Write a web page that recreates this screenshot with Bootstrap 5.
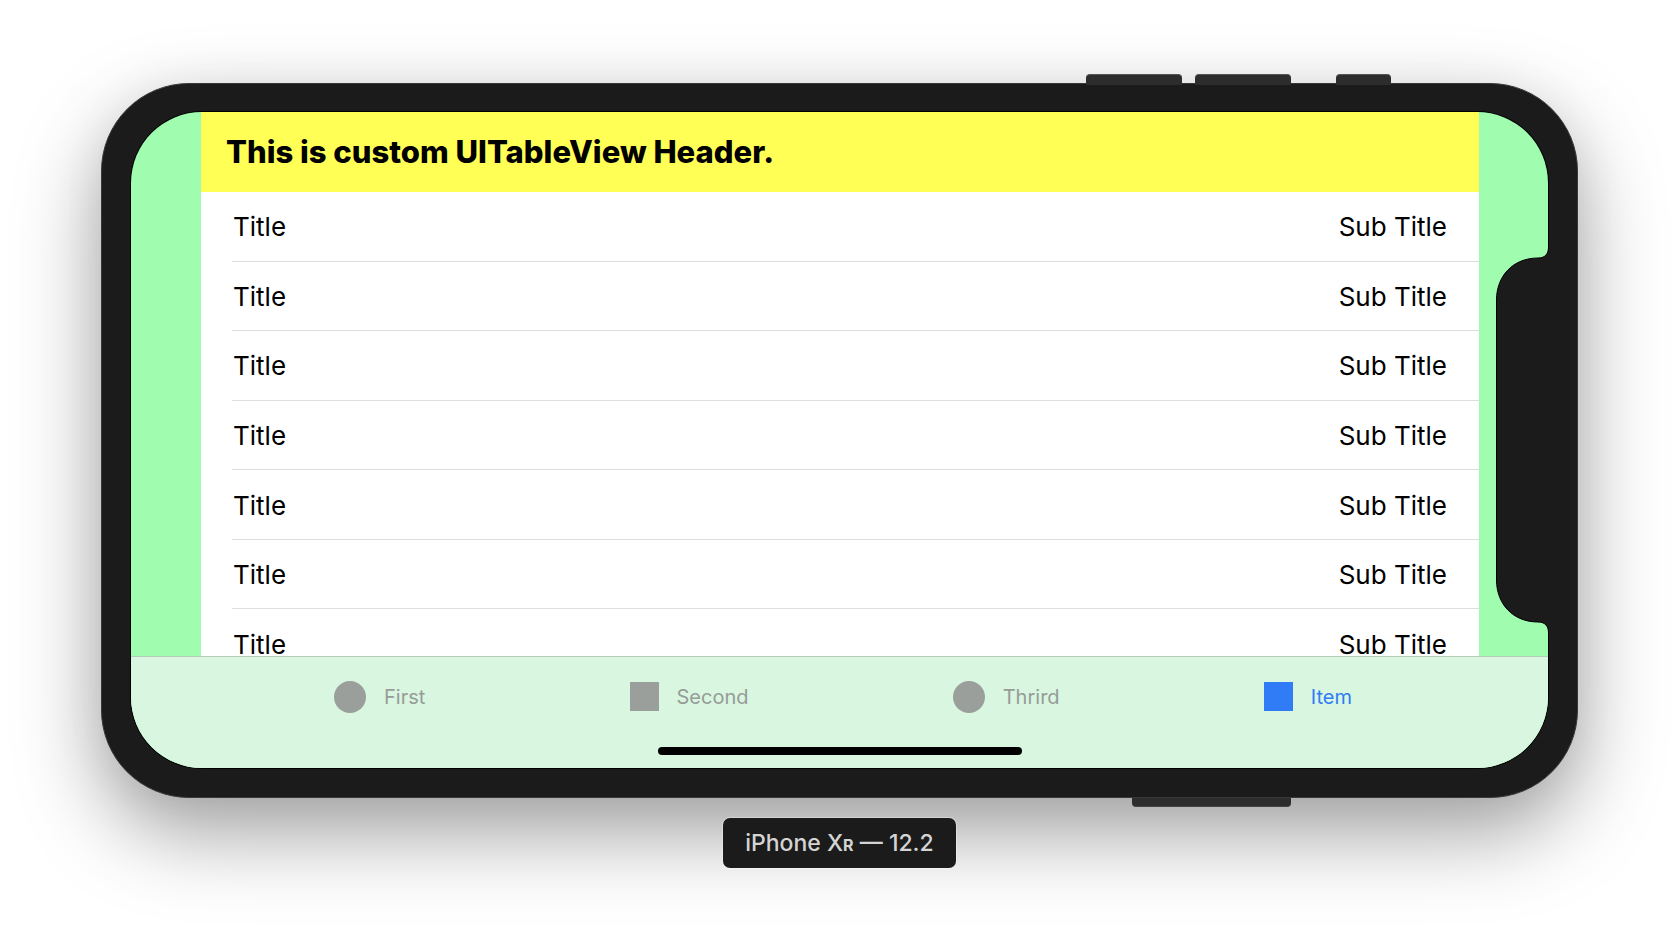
<!DOCTYPE html>
<html lang="en">
<head>
<meta charset="utf-8">
<meta name="viewport" content="width=device-width, initial-scale=1">
<title>Custom UITableView</title>
<link href="https://cdn.jsdelivr.net/npm/bootstrap@5.3.0/dist/css/bootstrap.min.css" rel="stylesheet">
<style>
  body { font-family: Inter, "Liberation Sans", sans-serif; color: #000; background: #fff; }
  .stage { padding: 74px 101px 0; }
  .side-keys { height: 9px; z-index: 1; }
  .side-key { width: 96px; background: #2c2d2c; }
  .keys-top { padding-right: 187px; }
  .keys-top .side-key { border-radius: 4px 4px 0 0; border-top: 1px solid #555; height: 11px; margin-left: 13px; }
  .keys-top .key-power { width: 55px; margin-left: 45px; }
  .keys-bottom { padding-right: 287px; }
  .keys-bottom .side-key { width: 159px; border-radius: 0 0 4px 4px; border-bottom: 1px solid #444; }
  .device { padding: 28px 29px 29px; border: 1px solid #383838; border-radius: 88px; background: #1b1b1b;
            box-shadow: 0 34px 84px rgba(0, 0, 0, .38), 0 0 50px rgba(0, 0, 0, .04); }
  .screen { border-radius: 71px; background: #a0fdb0; box-shadow: 0 0 0 1px #000; }
  .table-view { height: 544px; margin: 0 69px 0 70px; background: #fff; }
  .table-head { height: 80px; padding: 0 25px; background: #ffff55; font-size: 31px; font-weight: 800; line-height: 40px; }
  .cells { height: 487px; padding-left: 31px; }
  .cell { border-bottom: 1px solid #dededf; padding: 2px 32px 0 1px; font-size: 26px; line-height: 32px; }
  .tab-bar { background: #d8f6e0; border-top: 1px solid #b5cbbb; height: 112px; }
  .tabs { height: 79px; padding: 0 196px 0 203px; }
  .tab { border: 0; padding: 0; background: none; color: #979c98; font-size: 20px; line-height: 24px; gap: 18px; }
  .tab.active { color: #2f7cf6; }
  .tab svg { fill: #9b9f9b; }
  .tab.active svg { fill: #2f7cf6; }
  .home-line { width: 364px; height: 8px; margin-top: 11px; background: #000; }
  .notch { right: -2px; top: 134px; }
  .device-name { padding: 9px 22px 7px; margin-top: 11px; border-radius: 7px; background: #1b1b1b; color: #d4d4d4;
                 font-size: 23px; font-weight: 500; line-height: 32px; box-shadow: 0 0 0 1px rgba(255, 255, 255, .3); z-index: 1; }
  .small-cap { font-size: 16px; font-weight: 700; }
</style>
</head>
<body>
<main class="stage min-vh-100 d-flex flex-column overflow-hidden">
  <div class="side-keys keys-top position-relative d-flex justify-content-end">
    <span class="side-key"></span>
    <span class="side-key"></span>
    <span class="side-key key-power"></span>
  </div>

  <div class="device">
    <div class="position-relative">
      <div class="screen overflow-hidden">
        <section class="table-view overflow-hidden">
          <h1 class="table-head d-flex align-items-center mb-0">This is custom UITableView Header.</h1>
          <ul class="cells list-unstyled d-flex flex-column mb-0">
            <li class="cell flex-fill d-flex align-items-center justify-content-between"><span>Title</span><span>Sub Title</span></li>
            <li class="cell flex-fill d-flex align-items-center justify-content-between"><span>Title</span><span>Sub Title</span></li>
            <li class="cell flex-fill d-flex align-items-center justify-content-between"><span>Title</span><span>Sub Title</span></li>
            <li class="cell flex-fill d-flex align-items-center justify-content-between"><span>Title</span><span>Sub Title</span></li>
            <li class="cell flex-fill d-flex align-items-center justify-content-between"><span>Title</span><span>Sub Title</span></li>
            <li class="cell flex-fill d-flex align-items-center justify-content-between"><span>Title</span><span>Sub Title</span></li>
            <li class="cell flex-fill d-flex align-items-center justify-content-between"><span>Title</span><span>Sub Title</span></li>
          </ul>
        </section>

        <nav class="tab-bar d-flex flex-column align-items-center">
          <div class="tabs w-100 d-flex align-items-center justify-content-between">
            <button type="button" class="tab d-flex align-items-center"><svg width="32" height="32" aria-hidden="true"><circle cx="16" cy="16" r="16"/></svg>First</button>
            <button type="button" class="tab d-flex align-items-center"><svg width="29" height="29" aria-hidden="true"><rect width="29" height="29"/></svg>Second</button>
            <button type="button" class="tab d-flex align-items-center"><svg width="32" height="32" aria-hidden="true"><circle cx="16" cy="16" r="16"/></svg>Thrird</button>
            <button type="button" class="tab active d-flex align-items-center" aria-current="page"><svg width="29" height="29" aria-hidden="true"><rect width="29" height="29"/></svg>Item</button>
          </div>
          <div class="home-line rounded-pill"></div>
        </nav>
      </div>

      <svg class="notch position-absolute" width="54" height="388" viewBox="0 0 54 388" aria-hidden="true">
        <path d="M52.500 1C52.500 8 49 12 42 12C17 12 .5 30 .5 54V334C.5 358 17 376 42 376C49 376 52.500 380 52.500 387H54V1Z" fill="#1b1b1b"/>
        <path d="M52.500 1C52.500 8 49 12 42 12C17 12 .5 30 .5 54V334C.5 358 17 376 42 376C49 376 52.500 380 52.500 387" fill="none" stroke="#000"/>
      </svg>
    </div>
  </div>

  <div class="side-keys keys-bottom position-relative d-flex justify-content-end">
    <span class="side-key"></span>
  </div>
  <div class="device-name position-relative align-self-center">iPhone X<span class="small-cap">R</span> — 12.2</div>
</main>
<script src="https://cdn.jsdelivr.net/npm/bootstrap@5.3.0/dist/js/bootstrap.bundle.min.js"></script>
</body>
</html>
